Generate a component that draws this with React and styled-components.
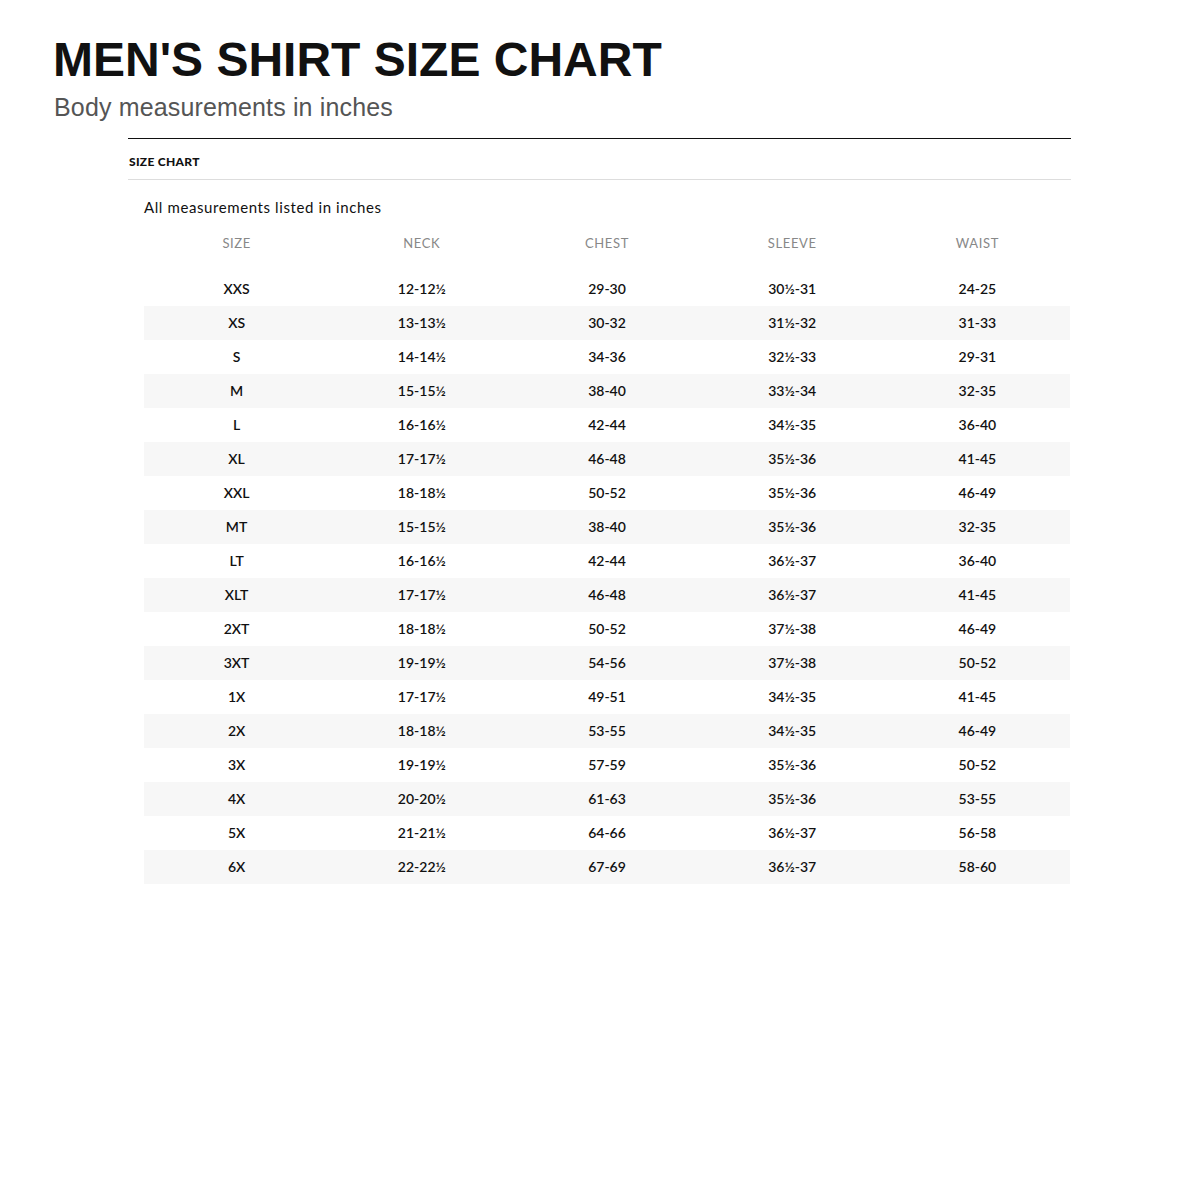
import React from "react";
import styled, { createGlobalStyle } from "styled-components";

const Global = createGlobalStyle`
  html, body { margin: 0; padding: 0; background: #fff; }
  body { font-family: "Liberation Sans", Arial, sans-serif; }
`;

const Page = styled.div`
  width: 1200px;
  padding: 32px 0 0 53px;
  box-sizing: border-box;
`;

const Title = styled.h1`
  margin: 0;
  font-family: "Liberation Sans", Arial, sans-serif;
  font-weight: 700;
  font-size: 48px;
  line-height: 56px;
  color: #111;
`;

const Subtitle = styled.p`
  margin: 4px 0 0 1px;
  font-family: "Liberation Sans", Arial, sans-serif;
  font-size: 25px;
  line-height: 30px;
  letter-spacing: 0.15px;
  color: #555;
`;

const Panel = styled.section`
  width: 943px;
  margin: 16px 0 0 75px;
  border-top: 1px solid #111;
`;

const PanelHead = styled.div`
  height: 41px;
  display: flex;
  align-items: center;
  padding: 4px 0 0 1px;
  box-sizing: border-box;
  border-bottom: 1px solid #ddd;
  font-family: "Lato", "Liberation Sans", sans-serif;
  font-weight: 900;
  font-size: 12px;
  letter-spacing: 0.3px;
  color: #111;
`;

const Body = styled.div`
  padding: 0 1px 0 16px;
`;

const Note = styled.div`
  margin-top: 18px;
  font-family: "Lato", "Liberation Sans", sans-serif;
  font-size: 15px;
  line-height: 18px;
  letter-spacing: 0.6px;
  color: #111;
`;

const Table = styled.div`
  display: grid;
  grid-template-columns: repeat(5, 1fr);
  width: 926px;
  margin-top: 10px;
`;

const Row = styled.div`
  display: contents;
`;

const HeadCell = styled.div`
  height: 34px;
  margin-bottom: 12px;
  display: flex;
  align-items: center;
  justify-content: center;
  font-family: "Lato", "Liberation Sans", sans-serif;
  font-size: 13px;
  letter-spacing: 0.6px;
  color: #888;
`;

const Cell = styled.div`
  height: 34px;
  display: flex;
  align-items: center;
  justify-content: center;
  padding-bottom: 1px;
  box-sizing: border-box;
  font-family: "Lato", "Liberation Sans", sans-serif;
  font-weight: 600;
  font-size: 14px;
  color: #111;
  background: ${(p) => (p.$striped ? "#f7f7f7" : "#fff")};
`;

const headers = ["SIZE", "NECK", "CHEST", "SLEEVE", "WAIST"];
const rows = [
  ["XXS", "12-12½", "29-30", "30½-31", "24-25"],
  ["XS", "13-13½", "30-32", "31½-32", "31-33"],
  ["S", "14-14½", "34-36", "32½-33", "29-31"],
  ["M", "15-15½", "38-40", "33½-34", "32-35"],
  ["L", "16-16½", "42-44", "34½-35", "36-40"],
  ["XL", "17-17½", "46-48", "35½-36", "41-45"],
  ["XXL", "18-18½", "50-52", "35½-36", "46-49"],
  ["MT", "15-15½", "38-40", "35½-36", "32-35"],
  ["LT", "16-16½", "42-44", "36½-37", "36-40"],
  ["XLT", "17-17½", "46-48", "36½-37", "41-45"],
  ["2XT", "18-18½", "50-52", "37½-38", "46-49"],
  ["3XT", "19-19½", "54-56", "37½-38", "50-52"],
  ["1X", "17-17½", "49-51", "34½-35", "41-45"],
  ["2X", "18-18½", "53-55", "34½-35", "46-49"],
  ["3X", "19-19½", "57-59", "35½-36", "50-52"],
  ["4X", "20-20½", "61-63", "35½-36", "53-55"],
  ["5X", "21-21½", "64-66", "36½-37", "56-58"],
  ["6X", "22-22½", "67-69", "36½-37", "58-60"],
];

export default function App() {
  return (
    <>
      <Global />
      <Page>
        <Title>MEN'S SHIRT SIZE CHART</Title>
        <Subtitle>Body measurements in inches</Subtitle>
        <Panel>
          <PanelHead>SIZE CHART</PanelHead>
          <Body>
            <Note>All measurements listed in inches</Note>
            <Table>
              {headers.map((h) => (
                <HeadCell key={h}>{h}</HeadCell>
              ))}
              {rows.map((r, i) => (
                <Row key={r[0]}>
                  {r.map((c, j) => (
                    <Cell key={j} $striped={i % 2 === 1}>
                      {c}
                    </Cell>
                  ))}
                </Row>
              ))}
            </Table>
          </Body>
        </Panel>
      </Page>
    </>
  );
}
